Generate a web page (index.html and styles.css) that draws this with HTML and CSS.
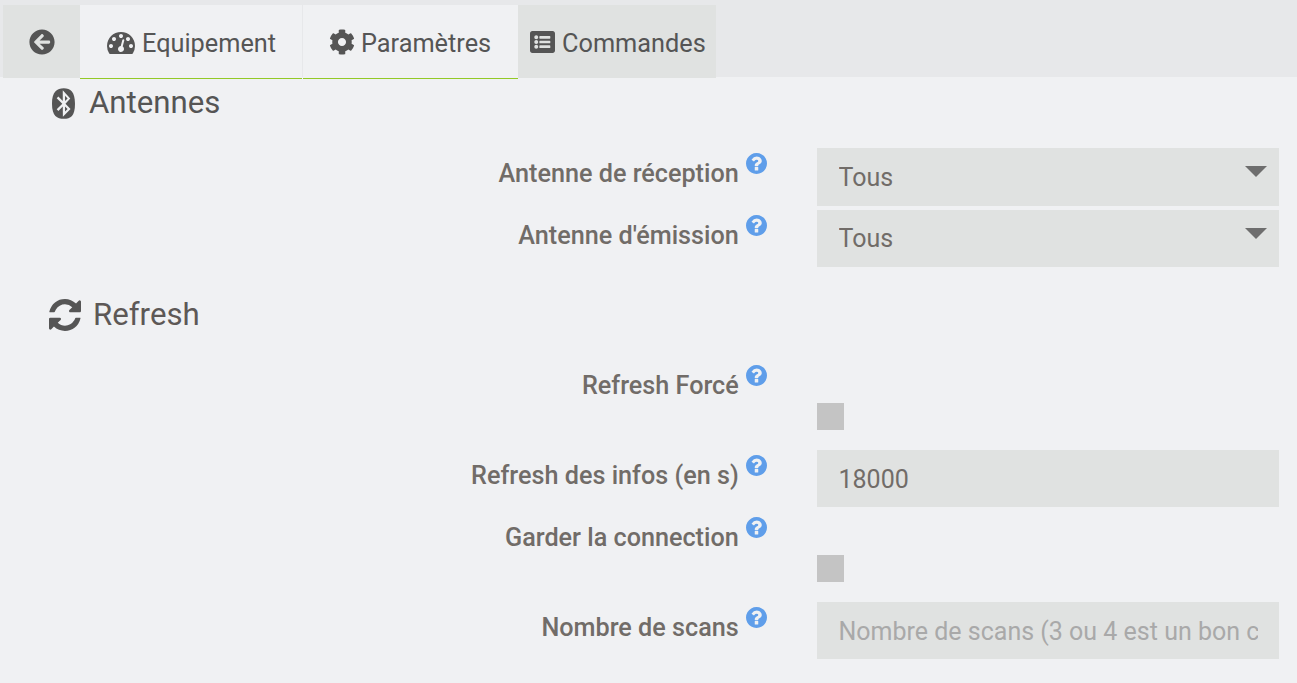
FILE: index.html
```html
<!DOCTYPE html>
<html>
<head>
<meta name="viewport" content="width=device-width, initial-scale=1">
<link rel="stylesheet" href="styles.css">
</head>
<body>

<ul class="tabs">
  <li class="tab tab-back">
    <svg class="tab-icon" viewBox="0 0 512 512"><path d="M256 504C119 504 8 393 8 256S119 8 256 8s248 111 248 248-111 248-248 248zm28.900-143.600L209.400 288H392c13.300 0 24-10.700 24-24v-16c0-13.300-10.700-24-24-24H209.400l75.500-72.400c9.700-9.300 9.900-24.800.4-34.300l-11-10.900c-9.400-9.400-24.600-9.400-33.900 0L107.700 239c-9.400 9.400-9.400 24.600 0 33.900l132.700 132.700c9.400 9.400 24.600 9.400 33.900 0l11-10.900c9.500-9.500 9.300-25-.4-34.300z"/></svg>
  </li>
  <li class="tab tab-active tab-equip">
    <svg class="tab-icon" viewBox="0 0 1792 1792"><path d="M384 1152q0-53-37.500-90.500t-90.500-37.500-90.500 37.500-37.500 90.500 37.500 90.500 90.500 37.500 90.500-37.500 37.500-90.500zm192-448q0-53-37.500-90.500t-90.500-37.500-90.500 37.500-37.500 90.500 37.500 90.500 90.500 37.500 90.500-37.500 37.500-90.500zm428 481l101-382q6-26-7.500-48.500t-38.500-29.500-48 6.500-30 39.500l-101 382q-60 5-107 43.500t-63 98.500q-20 77 20 146t117 89 146-20 89-117q16-60-6-117t-72-91zm660-33q0-53-37.500-90.500t-90.500-37.500-90.500 37.500-37.500 90.500 37.500 90.500 90.500 37.500 90.500-37.500 37.500-90.500zm-640-640q0-53-37.500-90.500t-90.500-37.500-90.500 37.500-37.500 90.500 37.500 90.500 90.500 37.500 90.500-37.500 37.500-90.500zm448 192q0-53-37.500-90.500t-90.500-37.500-90.500 37.500-37.500 90.500 37.500 90.500 90.500 37.500 90.500-37.500 37.500-90.500zm320 448q0 261-141 483-19 29-54 29h-1402q-35 0-54-29-141-221-141-483 0-182 71-348t191-286 286-191 348-71 348 71 286 191 191 286 71 348z"/></svg>
    <span class="tab-label">Equipement</span>
  </li>
  <li class="tab tab-active tab-params">
    <svg class="tab-icon" viewBox="0 0 512 512"><path d="M487.400 315.700l-42.600-24.600c4.300-23.200 4.300-47 0-70.200l42.600-24.600c4.900-2.800 7.100-8.600 5.500-14-11.100-35.600-30-67.800-54.700-94.600-3.800-4.100-10-5.100-14.800-2.300L380.800 110c-17.900-15.400-38.500-27.300-60.800-35.100V25.800c0-5.600-3.900-10.500-9.400-11.700-36.700-8.200-74.300-7.800-109.200 0-5.500 1.200-9.400 6.100-9.400 11.700V75c-22.200 7.900-42.800 19.800-60.800 35.100L88.700 85.500c-4.900-2.800-11-1.900-14.800 2.300-24.700 26.700-43.600 58.900-54.700 94.600-1.700 5.400.6 11.200 5.500 14L67.300 221c-4.300 23.200-4.300 47 0 70.200l-42.600 24.600c-4.900 2.800-7.100 8.600-5.500 14 11.100 35.600 30 67.800 54.700 94.600 3.800 4.100 10 5.100 14.800 2.300l42.600-24.600c17.900 15.400 38.500 27.300 60.800 35.100v49.200c0 5.600 3.900 10.500 9.400 11.700 36.700 8.200 74.300 7.800 109.200 0 5.500-1.200 9.400-6.100 9.400-11.700v-49.200c22.200-7.900 42.800-19.800 60.800-35.100l42.600 24.600c4.900 2.800 11 1.900 14.800-2.300 24.700-26.700 43.600-58.900 54.700-94.600 1.500-5.500-.7-11.300-5.600-14.100zM256 336c-44.100 0-80-35.900-80-80s35.900-80 80-80 80 35.900 80 80-35.900 80-80 80z"/></svg>
    <span class="tab-label">Paramètres</span>
  </li>
  <li class="tab tab-cmd">
    <svg class="tab-icon" viewBox="0 32 512 448"><path d="M464 480H48c-26.510 0-48-21.490-48-48V80c0-26.510 21.490-48 48-48h416c26.510 0 48 21.490 48 48v352c0 26.510-21.490 48-48 48zM128 120c-22.091 0-40 17.909-40 40s17.909 40 40 40 40-17.909 40-40-17.909-40-40-40zm0 96c-22.091 0-40 17.909-40 40s17.909 40 40 40 40-17.909 40-40-17.909-40-40-40zm0 96c-22.091 0-40 17.909-40 40s17.909 40 40 40 40-17.909 40-40-17.909-40-40-40zm288-136v-32c0-6.627-5.373-12-12-12H204c-6.627 0-12 5.373-12 12v32c0 6.627 5.373 12 12 12h200c6.627 0 12-5.373 12-12zm0 96v-32c0-6.627-5.373-12-12-12H204c-6.627 0-12 5.373-12 12v32c0 6.627 5.373 12 12 12h200c6.627 0 12-5.373 12-12zm0 96v-32c0-6.627-5.373-12-12-12H204c-6.627 0-12 5.373-12 12v32c0 6.627 5.373 12 12 12h200c6.627 0 12-5.373 12-12z"/></svg>
    <span class="tab-label">Commandes</span>
  </li>
</ul>

<div class="content">

  <h3 class="section section-antennes">
    <svg class="bt-icon" viewBox="32 0 384 512"><path d="M292.600 171.100L249.700 214l-.3-86 43.200 43.100m-43.200 219.800l43.100-43.100-42.900-42.900-.2 86zM416 259.400C416 465 344.100 512 230.900 512S32 465 32 259.400 115.400 0 228.600 0 416 53.900 416 259.400zm-158.500 0l79.400-88.600L211.800 36.500v176.900L138 139.600l-27 26.900 92.700 93-92.700 93 26.900 26.900 73.800-73.800 2.300 170 127.400-127.500-83.900-88.700z"/></svg>
    Antennes
  </h3>

  <div class="row">
    <label class="row-label">Antenne de réception <svg class="help" viewBox="128 128 1536 1536"><use href="#q"/></svg></label>
    <div class="select-wrap">
      <select class="field"><option>Tous</option></select>
    </div>
  </div>
  <div class="row">
    <label class="row-label">Antenne d'émission <svg class="help" viewBox="128 128 1536 1536"><use href="#q"/></svg></label>
    <div class="select-wrap">
      <select class="field"><option>Tous</option></select>
    </div>
  </div>

  <h3 class="section section-refresh">
    <svg class="refresh-icon" viewBox="128 128 1536 1536"><path d="M1639 1056q0 5-1 7-64 268-268 434.500t-478 166.500q-146 0-282.500-55t-243.500-157l-129 129q-19 19-45 19t-45-19-19-45v-448q0-26 19-45t45-19h448q26 0 45 19t19 45-19 45l-137 137q71 66 161 102t187 36q134 0 250-65t186-179q11-17 53-117 8-23 30-23h192q13 0 22.500 9.500t9.500 22.500zm25-800v448q0 26-19 45t-45 19h-448q-26 0-45-19t-19-45 19-45l138-138q-148-137-349-137-134 0-250 65t-186 179q-11 17-53 117-8 23-30 23h-199q-13 0-22.500-9.500t-9.500-22.500v-7q65-268 270-434.500t480-166.500q146 0 284 55.500t245 156.500l130-129q19-19 45-19t45 19 19 45z"/></svg>
    Refresh
  </h3>

  <div class="row row-check">
    <label class="row-label">Refresh Forcé <svg class="help" viewBox="128 128 1536 1536"><use href="#q"/></svg></label>
    <input class="check" type="checkbox">
  </div>
  <div class="row">
    <label class="row-label">Refresh des infos (en s) <svg class="help" viewBox="128 128 1536 1536"><use href="#q"/></svg></label>
    <input class="field field-text" type="text" value="18000">
  </div>
  <div class="row row-check">
    <label class="row-label">Garder la connection <svg class="help" viewBox="128 128 1536 1536"><use href="#q"/></svg></label>
    <input class="check" type="checkbox">
  </div>
  <div class="row">
    <label class="row-label">Nombre de scans <svg class="help" viewBox="128 128 1536 1536"><use href="#q"/></svg></label>
    <input class="field field-text" type="text" placeholder="Nombre de scans (3 ou 4 est un bon compromis)">
  </div>

</div>

<svg class="defs" width="0" height="0">
  <path id="q" d="M1024 1376v-192q0-14-9-23t-23-9h-192q-14 0-23 9t-9 23v192q0 14 9 23t23 9h192q14 0 23-9t9-23zm256-672q0-88-55.500-163t-138.500-116-170-41q-243 0-371 213-15 24 8 42l132 100q7 6 19 6 16 0 25-12 53-68 86-92 34-24 86-24 48 0 85.500 26t37.500 59q0 38-20 61t-68 45q-63 28-115.500 86.500t-52.500 125.500v36q0 14 9 23t23 9h192q14 0 23-9t9-23q0-19 21.500-49.500t54.500-49.500q32-18 49-28.500t46-35 44.500-48 28-60.500 12.500-81zm384 192q0 209-103 385.500t-279.500 279.500-385.500 103-385.500-103-279.500-279.500-103-385.500 103-385.500 279.500-279.500 385.500-103 385.500 103 279.500 279.500 103 385.500z"/>
</svg>

</body>
</html>
```

FILE: styles.css
```css
html, body {
  margin: 0;
  height: 683px;
  overflow: hidden;
}

body {
  background-color: #f0f1f3;
  font-family: Roboto, sans-serif;
  color: #555;
}

.defs {
  display: block;
}

/* ******** tabs ******** */

.tabs {
  display: flex;
  list-style: none;
  margin: 0;
  padding: 5px 0 0 3px;
  height: 72px;
  background-color: #e7e8ea;
}

.tab {
  display: flex;
  align-items: center;
  height: 73px;
  box-sizing: border-box;
  font-size: 25.300px;
  white-space: nowrap;
  background-color: #e0e2e1;
}

.tab-icon {
  width: 26px;
  height: 26px;
  fill: #555;
  flex: none;
}

.tab-label {
  padding-top: 3px;
}

.tab-back {
  width: 77px;
  padding-left: 26px;
}

.tab-active {
  background-color: #f0f1f3;
  border-bottom: 1px solid #93c927;
  height: 74px;
}

.tab-equip {
  width: 222px;
  padding-left: 27px;
  margin-right: 1px;
}

.tab-equip .tab-icon {
  width: 28px;
  height: 28px;
  margin-right: 7px;
}

.tab-params {
  width: 215px;
  padding-left: 26px;
}

.tab-params .tab-icon {
  margin-right: 6px;
}

.tab-cmd {
  width: 198px;
  padding-left: 12px;
}

.tab-cmd .tab-icon {
  width: 25px;
  height: 22px;
  margin-right: 7px;
}

/* ******** form ******** */

.content {
  padding-right: 18px;
}

.section {
  display: flex;
  align-items: center;
  margin: 0;
  font-size: 31.200px;
  font-weight: 400;
  line-height: 36px;
}

.section-antennes {
  padding: 8px 0 0 52px;
  margin-bottom: 27px;
}

.bt-icon {
  width: 23px;
  height: 31px;
  margin-right: 14px;
  fill: #555;
}

.section-refresh {
  padding-left: 49px;
  margin: 30px 0 26px;
  color: #5d5856;
}

.refresh-icon {
  width: 32px;
  height: 32px;
  fill: #555;
  margin-right: 12px;
}

.row {
  display: grid;
  grid-template-columns: 767px 1fr;
  column-gap: 50px;
  margin-bottom: 4px;
}

.row-check {
  height: 86.500px;
}

.row-label {
  display: block;
  text-align: right;
  padding-top: 5px;
  font-size: 25.200px;
  font-weight: 500;
  line-height: 30px;
  color: #716c68;
}

.row-check .row-label {
  padding-top: 6px;
}

.help {
  width: 21px;
  height: 21px;
  fill: #5f9eea;
  margin-left: 1px;
  vertical-align: 8px;
}

.field {
  display: block;
  width: 100%;
  height: 57.500px;
  box-sizing: border-box;
  padding: 1px 21px 0 21.500px;
  border: none;
  border-radius: 0;
  outline: none;
  appearance: none;
  background-color: #e0e2e1;
  font-family: Roboto, sans-serif;
  font-size: 25px;
  color: #716c68;
}

.field-text {
  padding-top: 3px;
}

.field::placeholder {
  color: #a9a9a9;
}

.select-wrap {
  position: relative;
}

.select-wrap::after {
  content: "";
  position: absolute;
  top: 18px;
  right: 12px;
  border-left: 11px solid transparent;
  border-right: 11px solid transparent;
  border-top: 11px solid #6e6e6e;
}

.check {
  display: block;
  appearance: none;
  width: 27px;
  height: 27px;
  margin: 44px 0 0;
  background-color: #c4c4c4;
}
```
